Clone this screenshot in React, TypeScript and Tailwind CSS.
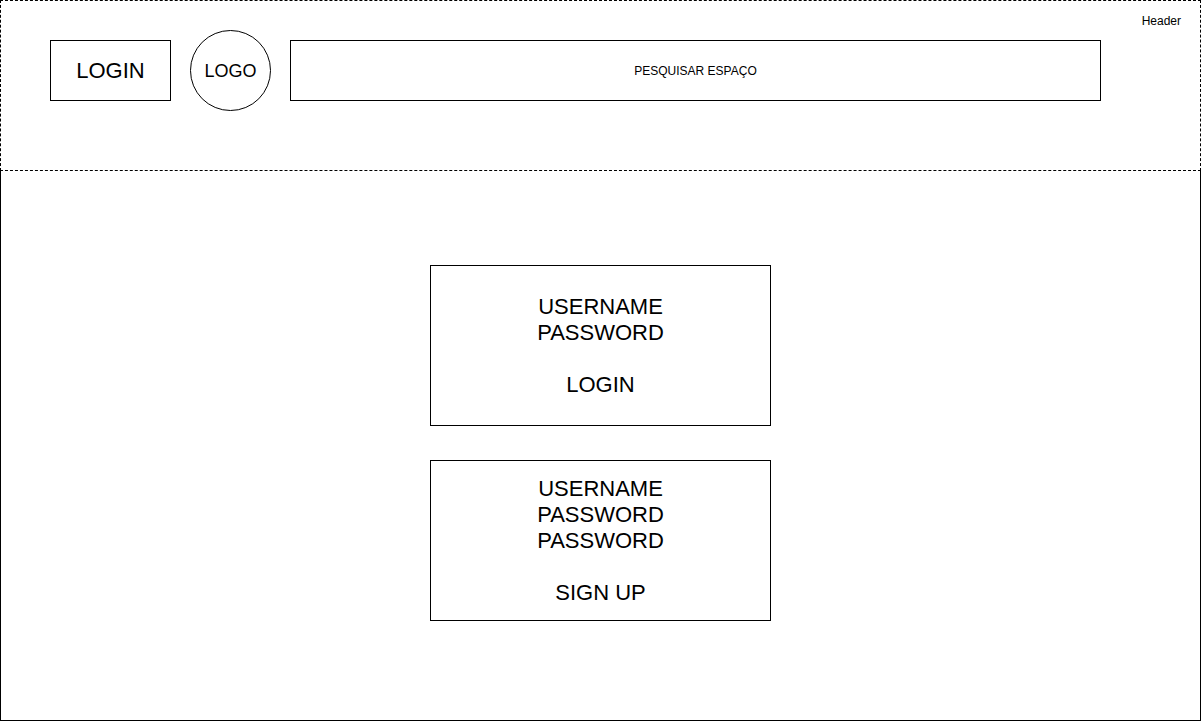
export default function App() {
    return (
        <div className="w-[1201px] h-[721px] bg-white text-black font-['Liberation_Sans',Arial,sans-serif]">
            {/* Header */}
            <div className="relative h-[171px] border border-dashed border-black pl-[49px] pt-[29px]">
                <div className="flex items-center gap-[19px]">
                    <div className="w-[121px] h-[61px] border border-black flex items-center justify-center text-[22px] leading-[26px]">
                        LOGIN
                    </div>
                    <div className="w-[81px] h-[81px] rounded-full border border-black flex items-center justify-center text-[18px] leading-[22px]">
                        LOGO
                    </div>
                    <div className="w-[811px] h-[61px] border border-black flex items-center justify-center text-[12px] leading-[14px]">
                        PESQUISAR ESPAÇO
                    </div>
                </div>
                <div className="absolute top-[13px] right-[19px] text-[12px] leading-[14px]">Header</div>
            </div>

            {/* Body */}
            <div className="h-[550px] border-l border-r border-b border-black flex flex-col items-center pt-[94px] gap-[34px]">
                <div className="w-[341px] h-[161px] border border-black flex flex-col items-center justify-center text-center text-[22px] leading-[26px]">
                    <div>USERNAME</div>
                    <div>PASSWORD</div>
                    <div className="h-[26px]"></div>
                    <div>LOGIN</div>
                </div>
                <div className="w-[341px] h-[161px] border border-black flex flex-col items-center justify-center text-center text-[22px] leading-[26px]">
                    <div>USERNAME</div>
                    <div>PASSWORD</div>
                    <div>PASSWORD</div>
                    <div className="h-[26px]"></div>
                    <div>SIGN UP</div>
                </div>
            </div>
        </div>
    );
}
